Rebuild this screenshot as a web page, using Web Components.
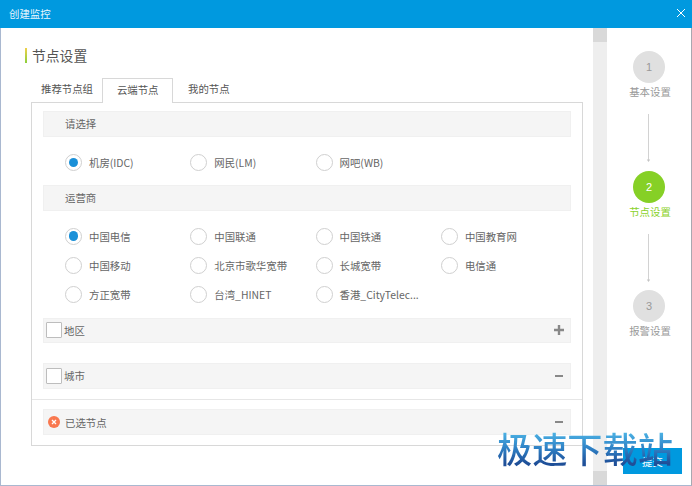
<!DOCTYPE html>
<html lang="zh-CN"><head><meta charset="utf-8"><title>创建监控</title>
<style>
html,body{margin:0;padding:0;background:#fff;width:692px;height:486px;overflow:hidden}
body{font:10.4px "Noto Sans CJK SC","Liberation Sans",sans-serif;color:#666}
</style></head><body>
<app-window>
  <main-pane>
    <section-title>节点设置</section-title>
    <tab-bar><tab-item>推荐节点组</tab-item><tab-item active>云端节点</tab-item><tab-item>我的节点</tab-item></tab-bar>
    <node-panel>
      <strip-row indent>请选择</strip-row>
      <radio-grid pad="first">
        <radio-opt checked>机房(IDC)</radio-opt><radio-opt>网民(LM)</radio-opt><radio-opt>网吧(WB)</radio-opt>
      </radio-grid>
      <strip-row indent>运营商</strip-row>
      <radio-grid>
        <radio-opt checked>中国电信</radio-opt><radio-opt>中国联通</radio-opt><radio-opt>中国铁通</radio-opt><radio-opt>中国教育网</radio-opt>
        <radio-opt>中国移动</radio-opt><radio-opt>北京市歌华宽带</radio-opt><radio-opt>长城宽带</radio-opt><radio-opt>电信通</radio-opt>
        <radio-opt>方正宽带</radio-opt><radio-opt>台湾_HINET</radio-opt><radio-opt>香港_CityTelec...</radio-opt>
      </radio-grid>
      <strip-row check toggle="plus">地区</strip-row>
      <strip-row check toggle="minus" class="mt">城市</strip-row>
      <panel-rule></panel-rule>
      <strip-row err toggle="minus">已选节点</strip-row>
    </node-panel>
  </main-pane>
  <scroll-rail></scroll-rail>
  <step-list>
    <step-item num="1">基本设置</step-item>
    <step-arrow></step-arrow>
    <step-item num="2" active>节点设置</step-item>
    <step-arrow></step-arrow>
    <step-item num="3">报警设置</step-item>
  </step-list>
  <submit-btn>提交</submit-btn>
  <water-mark>极速下载站</water-mark>
</app-window>
<script>
const def=(name,html,init)=>customElements.define(name,class extends HTMLElement{
  constructor(){super();this.attachShadow({mode:'open'}).innerHTML=typeof html==='function'?html(this):html;}
  connectedCallback(){if(init)init(this,this.shadowRoot);}
});
const FONT='"Noto Sans CJK SC","Liberation Sans",sans-serif';
def('app-window',`<style>
:host{display:flex;flex-direction:column;position:relative;width:692px;height:486px;box-sizing:border-box;overflow:hidden;font-family:${FONT}}
.bar{flex:none;height:27.5px;background:#0099df;color:#e8f6fd;display:flex;align-items:center;justify-content:space-between;padding:0 6px 1px 9px;box-sizing:border-box;font-size:10.4px}
.body{flex:1;min-height:0;display:flex;background:#fff;border:solid #a9b8d0;border-width:0 1px 1px 1px}
.body{border-right-color:#a8a8b0}
svg{display:block}
</style>
<div class="bar"><span>创建监控</span><svg width="10" height="10" viewBox="0 0 10 10"><path d="M1 1l8 8M9 1l-8 8" stroke="#fff" stroke-width="1" fill="none"/></svg></div>
<div class="body"><slot></slot></div>`);
def('main-pane',`<style>:host{display:block;flex:none;width:591.5px;box-sizing:border-box;padding:20.5px 0 0 24px}</style><slot></slot>`);
def('section-title',`<style>
:host{display:flex;align-items:center;height:15px;font-size:13.8px;color:#555;gap:5px;margin-bottom:14.5px}
i{flex:none;width:2px;height:15px;background:linear-gradient(#f0d04a,#8ccf3c)}
span{display:block;padding-bottom:2px}
</style><i></i><span><slot></slot></span>`);
def('tab-bar',`<style>:host{display:flex;margin-left:13px;height:24.5px;position:relative;z-index:1}</style><slot></slot>`);
def('tab-item',`<style>
:host{display:flex;align-items:center;justify-content:center;box-sizing:border-box;height:25px;padding:0 9.5px 4px;color:#555;font-size:10.4px}
:host([active]){background:#fff;border:1px solid #d8d8d8;border-bottom:0;padding:0 13.5px 2px;color:#555}
:host(:first-child){padding-left:3px;padding-right:9.5px}
:host(:last-child){padding-left:15px}
</style><slot></slot>`);
def('node-panel',`<style>:host{display:block;box-sizing:border-box;width:552px;margin-left:6px;height:343.5px;border:1px solid #d8d8d8;padding:8px 11px 0 11px}
::slotted(.mt){margin-top:20px}</style><slot></slot>`);
def('strip-row',`<style>
:host{display:flex;align-items:center;box-sizing:border-box;height:25.6px;background:#f5f5f5;border:1px solid #f0f0f0;color:#666;font-size:10.4px;position:relative}
:host([indent]){padding-left:21px}
.ck{flex:none;width:16px;height:16px;box-sizing:border-box;background:#fff;border:1px solid #bdbdbd;border-radius:1px;margin:0 2px 0 2px}
.er{flex:none;margin:0 5px 0 4px}
.tg{margin-left:auto;margin-right:6px;flex:none}
svg{display:block}
</style><span id="l"></span><span class="t"><slot></slot></span><span id="r" class="tg"></span>`,(h,s)=>{
  const l=s.getElementById('l'),r=s.getElementById('r');
  if(h.hasAttribute('check'))l.className='ck';
  if(h.hasAttribute('err')){l.className='er';l.innerHTML='<svg width="12" height="12" viewBox="0 0 12 12"><circle cx="6" cy="6" r="6" fill="#f9784f"/><path d="M4 4l4 4M8 4l-4 4" stroke="#fff" stroke-width="1.3"/></svg>';}
  const t=h.getAttribute('toggle');
  if(t==='plus')r.innerHTML='<svg width="10" height="10" viewBox="0 0 10 10"><path d="M0 5h10M5 0v10" stroke="#888" stroke-width="2.4"/></svg>';
  if(t==='minus')r.innerHTML='<svg width="10" height="10" viewBox="0 0 10 10"><path d="M1 5h8" stroke="#888" stroke-width="2"/></svg>';
});
def('radio-grid',`<style>:host{display:grid;grid-template-columns:repeat(4,125.3px);grid-auto-rows:29.33px;padding:11px 0 8px 22px}</style><slot></slot>`);
def('radio-opt',`<style>
:host{display:flex;align-items:center;gap:7px;color:#666;font-size:10.4px;white-space:nowrap}
i{flex:none;width:17px;height:17px;box-sizing:border-box;border:1px solid #d0d0d0;border-radius:50%;background:#fff;display:flex;align-items:center;justify-content:center}
:host([checked]) i::after{content:"";width:9.5px;height:9.5px;border-radius:50%;background:#1a90d8}
</style><i></i><span><slot></slot></span>`);
def('panel-rule',`<style>:host{display:block;height:1.6px;background:#e6e6e6;margin:10.2px -11px 8.8px}</style>`);
def('scroll-rail',`<style>
:host{display:flex;flex:none;flex-direction:column;justify-content:space-between;width:14.5px;background:#eeeeee}
i{display:block;height:14px;background:#d9d9d9}
</style><i></i><i></i>`);
def('step-list',`<style>:host{display:flex;flex-direction:column;align-items:center;flex:1;padding:23.5px 0 0 0;box-sizing:border-box}</style><slot></slot>`);
def('step-item',h=>`<style>
:host{display:flex;flex-direction:column;align-items:center;color:#999;font-size:10.4px;line-height:15px}
.c{width:32px;height:32px;border-radius:50%;background:#e0e0e0;color:#999;display:flex;align-items:center;justify-content:center;font:11px "Liberation Sans",sans-serif;margin-bottom:1px}
.l{padding-left:2px}
:host([active]){color:#8ad12b}
:host([active]) .c{background:#86d026;color:#fff}
</style><div class="c">${h.getAttribute('num')}</div><div class="l"><slot></slot></div>`);
def('step-arrow',`<style>:host{display:block;margin:15px 1px 8.5px 0}svg{display:block}</style>
<svg width="5" height="48" viewBox="0 0 5 48"><path d="M2.5 0V46" stroke="#d2d2d2" stroke-width="1"/><path d="M.8 45.5h3.4L2.5 48z" fill="#c4c4c4"/></svg>`);
def('submit-btn',`<style>:host{position:absolute;left:623px;top:448px;width:59px;height:26px;background:#0099df;color:#fff;display:flex;align-items:center;justify-content:center;font-size:10.4px}</style><slot></slot>`);
def('water-mark',`<style>:host{position:absolute;left:497px;top:426px;font:500 35.2px/44px ${FONT};white-space:nowrap;background:linear-gradient(#4cb2e4 15%,#2f82c6 50%,#1f4f98 85%);-webkit-background-clip:text;background-clip:text;color:transparent}</style><slot></slot>`);
</script>
</body></html>
